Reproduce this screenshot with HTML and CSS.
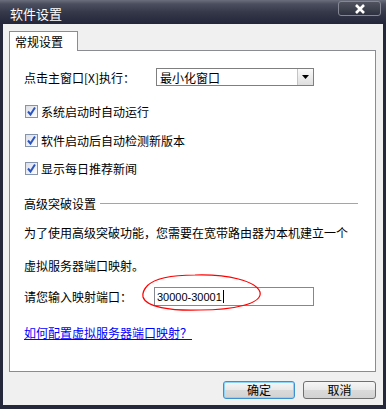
FILE: index.html
```html
<!DOCTYPE html>
<html lang="zh-CN">
<head>
    <meta charset="UTF-8">
    <title>软件设置</title>
    <link rel="stylesheet" href="styles.css">
</head>
<body>
<div class="window">
    <div class="titlebar">
        <span class="title">软件设置</span>
        <button class="close-button">
            <svg width="12" height="10" viewBox="0 0 12 10"><path d="M2 1 L10 9 M10 1 L2 9" stroke="#fff" stroke-width="2.6" fill="none"/></svg>
        </button>
    </div>
    <div class="client">
        <div class="tabs">
            <div class="tab">常规设置</div>
        </div>
        <div class="panel">
            <div class="row row-action">
                <span class="label label-action">点击主窗口[X]执行：</span>
                <div class="select">
                    <span class="select-text">最小化窗口</span>
                    <span class="select-button">
                        <svg width="7" height="4" viewBox="0 0 7 4"><path d="M0 0 H7 L3.5 4 Z" fill="#000"/></svg>
                    </span>
                </div>
            </div>
            <label class="check check-1"><span class="box"><svg width="11" height="11" viewBox="0 0 11 11"><path d="M2 5.5 L4.5 8.5 L9 1.5" stroke="#2a55c0" stroke-width="2" fill="none"/></svg></span>系统启动时自动运行</label>
            <label class="check check-2"><span class="box"><svg width="11" height="11" viewBox="0 0 11 11"><path d="M2 5.5 L4.5 8.5 L9 1.5" stroke="#2a55c0" stroke-width="2" fill="none"/></svg></span>软件启动后自动检测新版本</label>
            <label class="check check-3"><span class="box"><svg width="11" height="11" viewBox="0 0 11 11"><path d="M2 5.5 L4.5 8.5 L9 1.5" stroke="#2a55c0" stroke-width="2" fill="none"/></svg></span>显示每日推荐新闻</label>
            <div class="group">
                <span>高级突破设置</span>
                <span class="rule"></span>
            </div>
            <p class="note">为了使用高级突破功能，您需要在宽带路由器为本机建立一个<br>虚拟服务器端口映射。</p>
            <div class="row row-port">
                <span class="label label-port">请您输入映射端口：</span>
                <div class="field">30000-30001<span class="caret"></span></div>
            </div>
            <a class="help-link" href="#">如何配置虚拟服务器端口映射？</a>
        </div>
        <div class="buttons">
            <button class="btn btn-default">确定</button>
            <button class="btn">取消</button>
        </div>
    </div>
    <svg class="ring" width="386" height="409" viewBox="0 0 386 409">
        <path d="M147 286 C155 278 172 275 195 275 C228 274 256 281 260 292 C263 304 232 310 200 310 C170 311 146 307 143 297 C142 292 144 289 148 285" stroke="#ff0000" stroke-width="1.2" fill="none"/>
    </svg>
</div>
</body>
</html>
```

FILE: styles.css
```css
body { margin: 0; background: #fff; font-family: "Noto Sans CJK SC", "Liberation Sans", sans-serif; font-size: 12px; color: #000; }

.window { position: relative; width: 386px; height: 409px; display: flex; flex-direction: column; }

.titlebar {
    height: 24px;
    display: flex;
    align-items: center;
    justify-content: space-between;
    padding: 0 5px 0 10px;
    box-sizing: border-box;
    background: linear-gradient(to bottom, #6b6e7d 0, #4b4e5e 4px, #363949 12px, #23263a 24px);
}
.title { color: #fff; font-size: 13px; line-height: 24px; margin-top: 3px; }
.close-button {
    width: 43px;
    height: 15px;
    margin-top: -7px;
    padding: 0;
    border: 1px solid #858894;
    border-radius: 3px;
    background: linear-gradient(to bottom, #51545f, #2e3140);
    display: flex;
    align-items: center;
    justify-content: center;
}

.client {
    flex: 1;
    display: flex;
    flex-direction: column;
    background: #f0f0f0;
    border: 3px solid #25283a;
    border-top: none;
    border-bottom-width: 4px;
}

.tabs { margin-top: 7px; padding-left: 6px; display: flex; }
.tab {
    position: relative;
    z-index: 1;
    width: 62px;
    height: 19px;
    margin-bottom: -1px;
    padding-left: 5px;
    box-sizing: content-box;
    border: 1px solid #8a8c93;
    border-bottom: none;
    background: #fff;
    line-height: 19px;
}

.panel {
    height: 322px;
    box-sizing: border-box;
    margin: 0 7px 0 6px;
    padding: 0 17px 0 14px;
    border: 1px solid #8a8c93;
    background: #fff;
    display: flex;
    flex-direction: column;
    align-items: flex-start;
}

.row { display: flex; align-items: center; }
.row-action { margin-top: 17px; height: 18px; }
.label-action { width: 132px; }
.select {
    width: 158px;
    height: 18px;
    box-sizing: border-box;
    border: 1px solid #7f7f7f;
    display: flex;
    align-items: center;
    justify-content: space-between;
}
.select-text { padding-left: 3px; }
.select-button {
    width: 15px;
    height: 16px;
    border-left: 1px solid #c4c4c4;
    background: linear-gradient(to bottom, #fafafa, #dedede);
    display: flex;
    align-items: center;
    justify-content: center;
}

.check { display: flex; align-items: center; height: 13px; line-height: 13px; }
.check-1 { margin-top: 19px; }
.check-2 { margin-top: 16px; }
.check-3 { margin-top: 15px; }
.box {
    width: 11px;
    height: 11px;
    margin: 0 3px 0 1px;
    border: 1px solid #8594ac;
    background: linear-gradient(135deg, #dcdfe6, #fdfdfd);
    display: flex;
}

.group { margin-top: 21px; height: 14px; width: 100%; display: flex; align-items: center; }
.rule { flex: 1; height: 1px; margin-left: 4px; background: #a5a5a5; }

.note { margin: 6px 0 0; line-height: 33px; }

.row-port { margin-top: 5px; height: 19px; }
.label-port { width: 130px; }
.field {
    width: 160px;
    height: 19px;
    box-sizing: border-box;
    border: 1px solid #828790;
    padding-left: 2px;
    display: flex;
    align-items: center;
    font-family: "Liberation Sans", sans-serif;
    font-size: 11px;
}
.caret { width: 1px; height: 13px; margin-left: 1px; background: #000; }

.help-link { margin-top: 20px; line-height: 14px; color: #0000ff; text-decoration: underline; }

.buttons { display: flex; justify-content: flex-end; gap: 8px; margin-top: 9px; padding-right: 7px; }
.btn {
    width: 73px;
    height: 18px;
    padding: 0;
    border: 1px solid #707070;
    border-radius: 3px;
    background: linear-gradient(to bottom, #f6f6f6 0, #e8e8e8 50%, #dadada 51%, #d2d2d2 100%);
    font-family: "Noto Sans CJK SC", sans-serif;
    font-size: 12px;
    line-height: 16px;
    color: #000;
}
.btn-default { width: 72px; border-color: #3c8fd0; box-shadow: inset 0 0 0 1px #8ed2f6; }

.ring { position: absolute; left: 0; top: 0; pointer-events: none; }
```
